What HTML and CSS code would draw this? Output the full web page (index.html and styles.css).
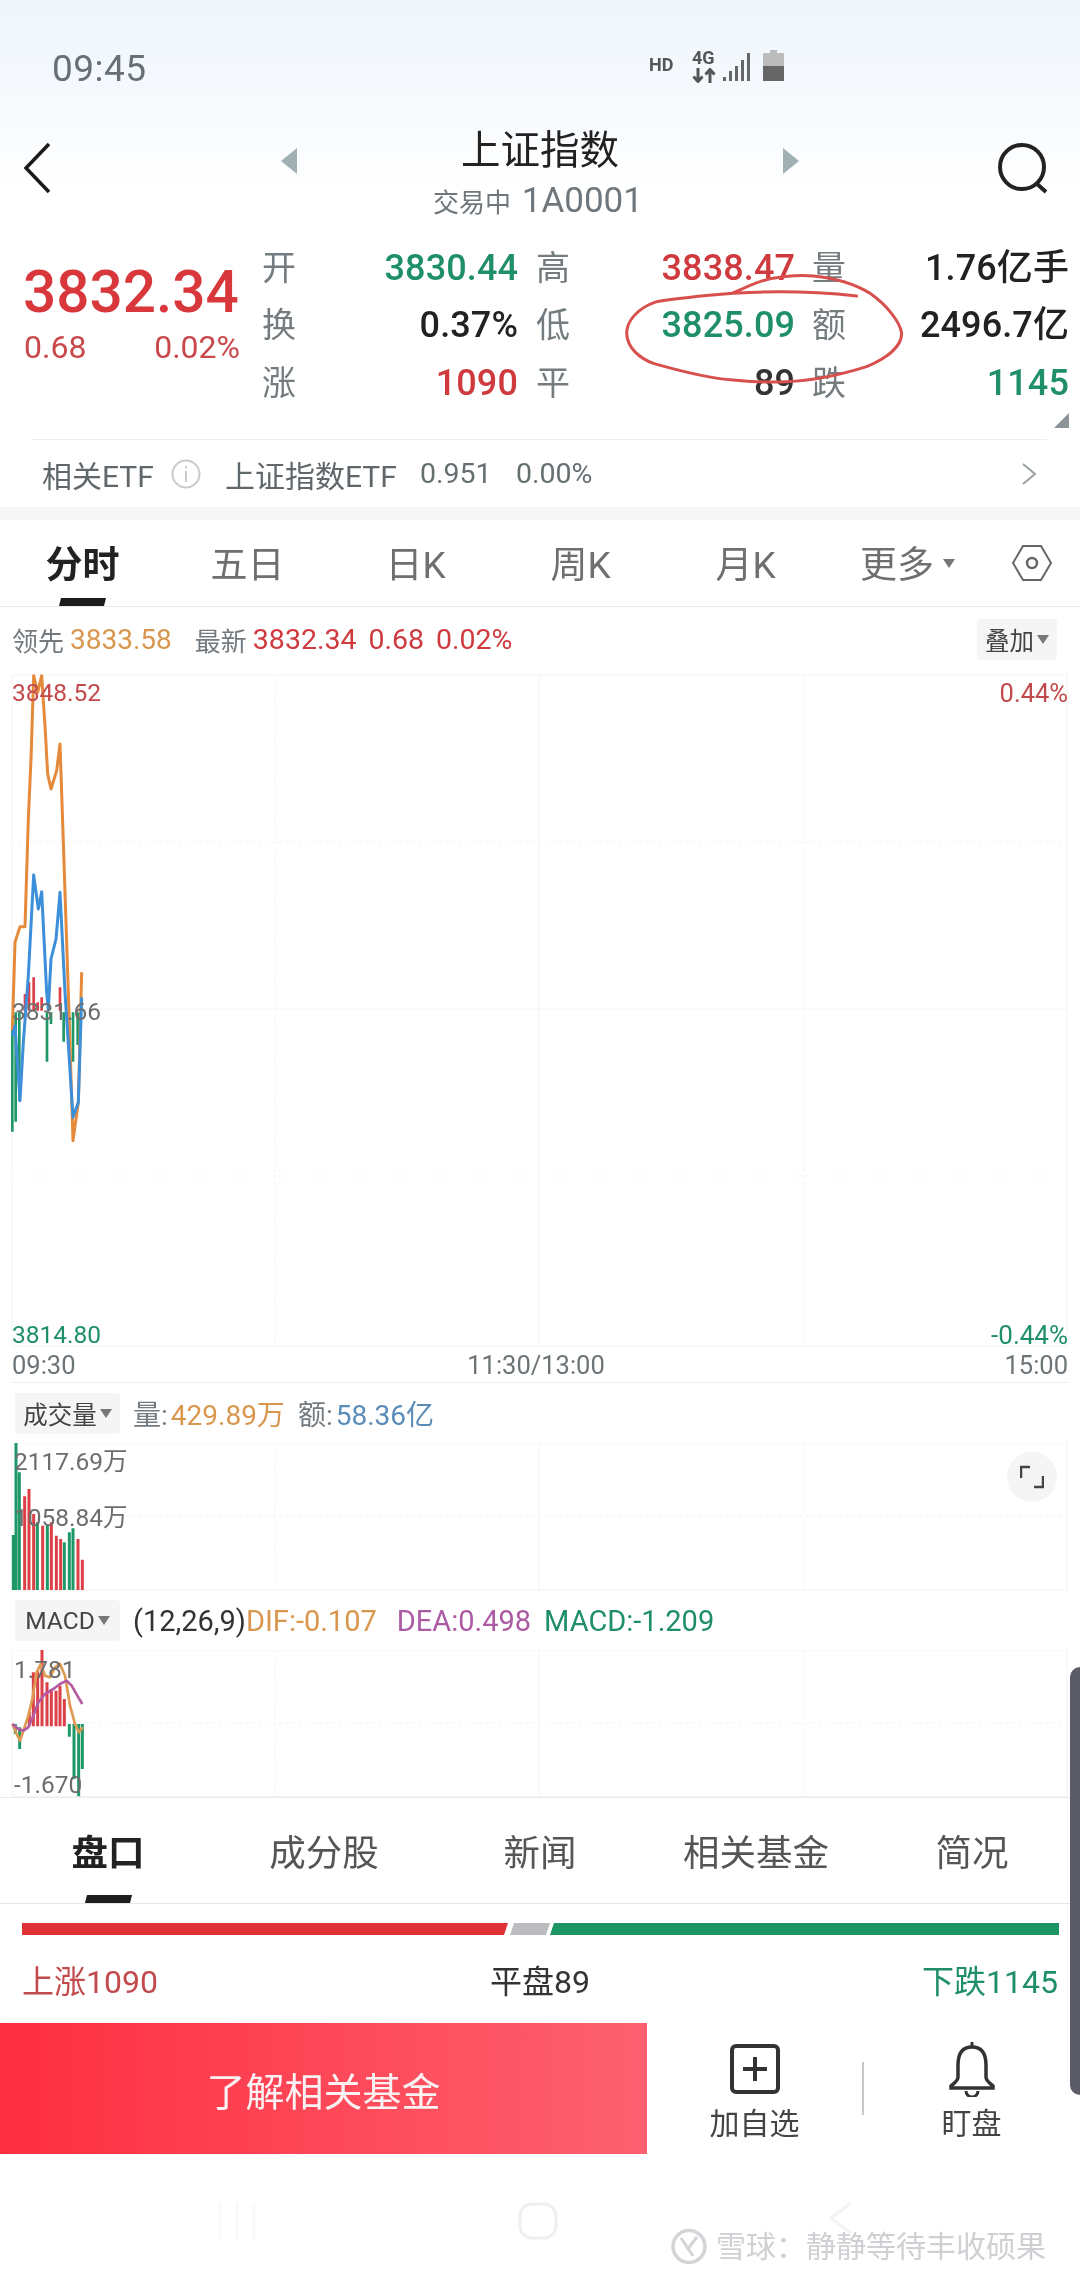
FILE: index.html
```html
<!DOCTYPE html>
<html lang="zh">
<head>
<meta charset="utf-8">
<title>上证指数</title>
<link rel="stylesheet" href="styles.css">
</head>
<body>
<div class="page">
  <div class="top">
    <div class="status">
      <span class="time">09:45</span>
      <div class="sys">
        <span class="hd">HD</span>
        <div class="net">
          <span class="fourg">4G</span>
          <svg width="24" height="15" viewBox="0 0 24 15"><path d="M6 0V13M1.500 8.500L6 13.500L10.500 8.500M18 15V2M13.500 6.500L18 1.500L22.500 6.500" fill="none" stroke="#555" stroke-width="3"/></svg>
        </div>
        <svg class="signal" width="28" height="28" viewBox="0 0 28 28"><path d="M1.500 28V24M7.500 28V18M13.500 28V13M19.500 28V7M25.500 28V0" stroke="#666" stroke-width="3"/></svg>
        <svg width="21" height="31" viewBox="0 0 21 31"><path d="M7 0H14V3H21V16H0V3H7Z" fill="#bcbcbc"/><rect y="16" width="21" height="15" fill="#666"/></svg>
      </div>
    </div>
    <div class="head">
      <svg class="back" width="30" height="52" viewBox="0 0 30 52"><path d="M27 2L4 26L27 50" fill="none" stroke="#1a1a1a" stroke-width="3.500"/></svg>
      <i class="tri tri-l"></i>
      <div class="title">
        <div class="name">上证指数</div>
        <div class="sub"><span class="sub-state">交易中</span> 1A0001</div>
      </div>
      <i class="tri tri-r"></i>
      <svg class="search" width="54" height="52" viewBox="0 0 54 52"><circle cx="26" cy="25" r="22" fill="none" stroke="#222" stroke-width="4"/><path d="M40 41L50 50" stroke="#222" stroke-width="4"/></svg>
    </div>
  </div>

  <div class="quote">
    <div class="last">
      <div class="price">3832.34</div>
      <div class="chg"><span>0.68</span><span>0.02%</span></div>
    </div>
    <div class="qgrid">
      <span class="lab">开</span><span class="val green">3830.44</span>
      <span class="lab">高</span><span class="val red">3838.47</span>
      <span class="lab">量</span><span class="val">1.76亿手</span>
      <span class="lab">换</span><span class="val">0.37%</span>
      <span class="lab">低</span><span class="val green">3825.09</span>
      <span class="lab">额</span><span class="val">2496.7亿</span>
      <span class="lab">涨</span><span class="val red">1090</span>
      <span class="lab">平</span><span class="val dark">89</span>
      <span class="lab">跌</span><span class="val green">1145</span>
    </div>
    <i class="corner"></i>
  </div>

  <div class="etf">
    <span class="etf-a">相关ETF</span>
    <svg class="info" width="30" height="30" viewBox="0 0 30 30"><circle cx="15" cy="15" r="13.500" fill="none" stroke="#c9cccd" stroke-width="2"/><path d="M15 12V23M15 7V9.500" stroke="#c9cccd" stroke-width="2"/></svg>
    <span class="etf-b">上证指数ETF</span>
    <span class="etf-c">0.951</span>
    <span class="etf-d">0.00%</span>
    <svg class="etf-go" width="16" height="22" viewBox="0 0 16 22"><path d="M2 1L14 11L2 21" fill="none" stroke="#9aa0a3" stroke-width="2"/></svg>
  </div>

  <div class="tabs">
    <span class="tab on">分时</span>
    <span class="tab">五日</span>
    <span class="tab">日K</span>
    <span class="tab">周K</span>
    <span class="tab">月K</span>
    <span class="tab">更多<i class="caret caret-more"></i></span>
    <svg class="hex" width="40" height="36" viewBox="0 0 40 36"><path d="M1 18L11 1H29L39 18L29 35H11Z" fill="none" stroke="#666" stroke-width="2"/><circle cx="20" cy="18" r="5" fill="none" stroke="#666" stroke-width="2.500"/></svg>
  </div>

  <div class="inforow">
    <span class="gray">领先</span><span class="orange">3833.58</span>
    <span class="gray ml">最新</span><span class="red">3832.34</span>
    <span class="red ms">0.68</span><span class="red ms">0.02%</span>
    <span class="pick pick-add">叠加<i class="caret"></i></span>
  </div>

  <div class="chart chart-main">
    <svg class="plot" width="1080" height="680" viewBox="0 24 3240 2040">
      <g class="grid">
        <path d="M36 48H3201M36 1050H3201M36 2061H3201M36 48V2061M1617 48V2061M3201 48V2061"/>
        <path class="dash" d="M36 549H3201M36 1551H3201M825 48V2061M2412 48V2061"/>
      </g>
      <path d="M37 1100V1418M47 1060V1388M58 1060V1325M141 1060V1208M153 1060V1095M191 1060V1148M219 1060V1208M233 1060V1158" class="bar-g" stroke-width="8"/>
      <path d="M75 1005V1055M87 970V1055M101 955V1055M113 1030V1055M125 1015V1055M180 985V1055" class="bar-r" stroke-width="8"/>
      <polyline class="ln-o" points="37,1115 45,850 60,803 75,803 85,480 93,300 101,50 113,100 125,50 135,200 143,345 153,390 170,335 180,255 190,550 205,1000 219,1445 235,1330 245,940"/>
      <polyline class="ln-b" points="37,1130 45,1100 60,1325 70,1150 85,950 101,648 115,750 125,698 140,1000 145,1050 153,900 168,840 180,700 195,1000 219,1375 235,1330 245,1015"/>
    </svg>
    <span class="tag tl">3848.52</span>
    <span class="tag tr">0.44%</span>
    <span class="tag ml-tag">3831.66</span>
    <span class="tag bl">3814.80</span>
    <span class="tag br">-0.44%</span>
  </div>

  <div class="timerow"><span>09:30</span><span>11:30/13:00</span><span>15:00</span></div>

  <div class="ihead">
    <span class="pick">成交量<i class="caret"></i></span>
    <span class="gray">量:</span><span class="orange">429.89万</span>
    <span class="gray ms2">额:</span><span class="blue">58.36亿</span>
  </div>

  <div class="chart chart-vol">
    <svg class="plot" width="1080" height="148" viewBox="0 72 3240 444">
      <g class="grid">
        <path d="M36 72H3201M36 513H3201M36 72V513M1617 72V513M3201 72V513"/>
        <path class="dash" d="M36 291H3201M825 72V513M2412 72V513"/>
      </g>
      <path class="bar-g" stroke-width="9" d="M40 513V348M48 513V72M58 513V160M112 513V310M142 513V318M193 513V370M208 513V340M219 513V328"/>
      <path class="bar-r" stroke-width="9" d="M74 513V232M87 513V210M101 513V285M128 513V320M154 513V310M169 513V350M182 513V360M234 513V360M247 513V422"/>
    </svg>
    <span class="tag v1">2117.69万</span>
    <span class="tag v2">1058.84万</span>
    <button class="expand" type="button"><svg width="24" height="24" viewBox="0 0 24 24"><path d="M1 13V2H10M23 11V22H14" fill="none" stroke="#444" stroke-width="2.500"/></svg></button>
  </div>

  <div class="ihead ihead-m">
    <span class="pick">MACD<i class="caret"></i></span>
    <span class="params">(12,26,9)</span><span class="orange">DIF:-0.107</span>
    <span class="purple ms3">DEA:0.498</span>
    <span class="green ms4">MACD:-1.209</span>
  </div>

  <div class="chart chart-macd">
    <svg class="plot" width="1080" height="147" viewBox="0 693 3240 441">
      <g class="grid">
        <path d="M36 693H3201M36 1132H3201M36 693V1132M1617 693V1132M3201 693V1132"/>
        <path class="dash" d="M36 912H3201M825 693V1132M2412 693V1132"/>
      </g>
      <path class="bar-r" stroke-width="9" d="M88 922V878M100 922V760M113 922V755M126 922V690M141 922V790M154 922V810M168 922V815M180 922V800M193 922V840"/>
      <path class="bar-g" stroke-width="9" d="M46 915V945M59 925V990M208 915V953M222 915V1080M236 915V1132M247 915V1050"/>
      <polyline class="ln-o2" points="37,915 50,945 60,965 72,930 85,890 97,840 110,760 122,735 135,770 150,775 165,745 180,735 195,770 210,860 225,915 237,940 248,925"/>
      <polyline class="ln-m" points="37,915 55,930 70,935 85,925 100,890 115,850 135,825 160,810 180,795 200,785 215,800 232,830 247,855"/>
    </svg>
    <span class="tag m1">1.781</span>
    <span class="tag m2">-1.670</span>
  </div>

  <div class="tabs2">
    <span class="tab2 on">盘口</span>
    <span class="tab2">成分股</span>
    <span class="tab2">新闻</span>
    <span class="tab2">相关基金</span>
    <span class="tab2">简况</span>
  </div>

  <div class="ratio">
    <i class="seg seg-r"></i><i class="seg seg-n"></i><i class="seg seg-g"></i>
  </div>
  <div class="counts">
    <span class="red-soft">上涨1090</span>
    <span class="mid">平盘89</span>
    <span class="green">下跌1145</span>
  </div>

  <div class="actions">
    <div class="cta">了解相关基金</div>
    <div class="act">
      <svg width="50" height="50" viewBox="0 0 50 50"><rect x="2" y="2" width="46" height="46" rx="4" fill="none" stroke="#333" stroke-width="4"/><path d="M25 13V37M13 25H37" stroke="#333" stroke-width="4"/></svg>
      <span>加自选</span>
    </div>
    <i class="vr"></i>
    <div class="act">
      <svg width="48" height="56" viewBox="0 0 48 56"><path d="M24 1V7" stroke="#333" stroke-width="3"/><path d="M24 6C13 6 10 15 10 24V36C10 40 6 42 3 45V47H45V45C42 42 38 40 38 36V24C38 15 35 6 24 6Z" fill="none" stroke="#333" stroke-width="3.500"/><path d="M18 50A6 6 0 0 0 30 50" fill="none" stroke="#333" stroke-width="3"/></svg>
      <span>盯盘</span>
    </div>
  </div>

  <div class="nav">
    <svg width="40" height="38" viewBox="0 0 40 38"><path d="M3 0V38M20 0V38M37 0V38" stroke="#f9f9f9" stroke-width="3"/></svg>
    <svg class="nav-home" width="40" height="38" viewBox="0 0 40 38"><rect x="2" y="2" width="36" height="34" rx="12" fill="none" stroke="#efefef" stroke-width="3"/></svg>
    <svg width="24" height="32" viewBox="0 0 24 32"><path d="M22 1L2 16L22 31" fill="none" stroke="#f3f3f3" stroke-width="3"/></svg>
  </div>

  <svg class="circle" width="320" height="170" viewBox="0 0 960 510"><path d="M770 138C650 125 520 122 400 130C300 138 230 145 170 155C110 175 80 215 80 250C82 295 120 325 160 340C230 360 320 385 400 390C460 396 510 398 560 395C630 393 720 375 800 350C860 325 905 290 905 250C900 215 860 165 810 130C770 105 710 85 640 78C590 74 520 80 480 95C450 105 420 120 395 130" fill="none" stroke="#d8504e" stroke-width="9" stroke-linecap="round"/></svg>

  <i class="edge"></i>

  <div class="mark">
    <svg width="36" height="37" viewBox="0 0 36 37"><circle cx="18" cy="18.500" r="16" fill="none" stroke="#d4d4d8" stroke-width="3.500"/><path d="M10 10L22 28M26 9L16 22" fill="none" stroke="#d4d4d8" stroke-width="3"/></svg>
    <span>雪球：静静等待丰收硕果</span>
  </div>
</div>
</body>
</html>
```

FILE: styles.css
```css
* { box-sizing: border-box; }
html, body { margin: 0; padding: 0; background: #fff; }
body { font-family: Roboto, "Noto Sans CJK SC", sans-serif; color: #222; }
.page { position: relative; width: 1080px; height: 2280px; overflow: hidden; display: flex; flex-direction: column; background: #fff; filter: blur(0.5px); }
i { display: block; font-style: normal; }

.red { color: #cf3a3e; }
.red-soft { color: #c2494c; }
.green { color: #1f8f68; }
.orange { color: #d9964e; }
.blue { color: #5b8cb8; }
.purple { color: #ab5aa3; }
.gray { color: #737b80; }
.dark { color: #333; }

.top { height: 236px; background: linear-gradient(#eff6fc 0, #f5f9fd 90px, #fff 190px); }
.status { height: 116px; padding: 50px 296px 0 52px; display: flex; justify-content: space-between; align-items: flex-start; }
.time { font-size: 37px; line-height: 38px; color: #667075; letter-spacing: 0.5px; }
.sys { display: flex; align-items: flex-start; }
.hd { font-size: 18px; font-weight: 700; line-height: 18px; margin-top: 6px; width: 43px; color: #555; }
.net { width: 31px; display: flex; flex-direction: column; align-items: flex-start; }
.fourg { font-size: 18px; font-weight: 700; line-height: 16px; color: #555; margin-bottom: 2px; }
.signal { margin: 3px 12px 0 0; }

.head { display: grid; grid-template-columns: 281px 16px 1fr 16px 281px; align-items: start; }
.back { margin: 26px 0 0 22px; }
.tri { width: 0; height: 0; margin-top: 32px; border-top: 13px solid transparent; border-bottom: 13px solid transparent; }
.tri-l { border-right: 16px solid #a0b0b5; }
.tri-r { border-left: 16px solid #a0b0b5; }
.title { text-align: center; }
.name { font-size: 39.500px; line-height: 52px; height: 56px; margin-top: 9px; color: #222; }
.sub { font-size: 35px; line-height: 36px; color: #6f777c; margin-top: 2px; margin-left: -4px; }
.sub-state { font-size: 26px; margin-right: 2px; }
.search { margin: 26px 0 0 197px; }

.quote { position: relative; height: 203px; display: flex; padding-left: 24px; }
.last { width: 238px; }
.price { font-size: 58.500px; font-weight: 500; line-height: 70px; height: 70px; margin-top: 21px; margin-left: -1px; color: #d8373b; white-space: nowrap; }
.chg { display: flex; justify-content: space-between; width: 216px; font-size: 32px; line-height: 40px; margin-top: 0; color: #c8484b; }
.qgrid { display: grid; grid-template-columns: 36px 220px 55px 222px 54px 220px; grid-auto-rows: 57.500px; align-items: center; height: 174px; margin-top: 3px; }
.lab { font-size: 34px; line-height: 40px; color: #757c80; text-align: right; margin-right: 3px; white-space: nowrap; }
.val { font-size: 36px; font-weight: 500; line-height: 40px; text-align: right; white-space: nowrap; letter-spacing: 0.1px; }
.corner { position: absolute; right: 11px; top: 177px; width: 0; height: 0; border-left: 15px solid transparent; border-bottom: 15px solid #8c9498; }
.circle { position: absolute; left: 600px; top: 250px; }

.etf { height: 68px; margin: 0 33px 0 31px; border-top: 1px solid #eee; display: flex; align-items: center; font-size: 30px; color: #5f676b; padding-left: 11px; }
.etf-a { width: 129px; }
.etf-b { margin-left: 24px; width: 195px; white-space: nowrap; }
.etf-c { width: 96px; font-size: 28.500px; color: #666e72; }
.etf-d { font-size: 28.500px; color: #666e72; }
.etf-go { margin-left: auto; margin-right: 10px; }

.tabs { height: 100px; padding-top: 8px; border-top: 13px solid #f6f6f6; border-bottom: 1px solid #eaeaea; display: flex; align-items: center; position: relative; }
.tab { width: 165px; font-size: 37px; line-height: 40px; color: #6f6f6f; text-align: center; padding-bottom: 2px; display: flex; justify-content: center; align-items: center; }
.tab:nth-child(n+3):nth-child(-n+5) { padding-left: 6px; }
.tab.on { color: #222; font-weight: 700; }
.tab.on::after, .tab2.on::after { content: ""; position: absolute; width: 45px; height: 8px; background: #1d1d1d; bottom: 0; transform: skewX(-14deg); }
.tab.on::after { left: 60px; }
.hex { margin-left: 22px; margin-bottom: 8px; }
.caret { width: 0; height: 0; margin-left: 3px; border-left: 6px solid transparent; border-right: 6px solid transparent; border-top: 9px solid #777; }
.caret-more { margin-left: 9px; margin-top: -6px; }

.inforow { height: 60px; padding: 5px 23px 0 12px; display: flex; align-items: center; font-size: 28.500px; white-space: nowrap; }
.inforow .gray { font-size: 26px; }
.inforow .gray + span { margin-left: 6px; }
.inforow .orange { font-size: 28px; }
.ml { margin-left: 23px; }
.ms { margin-left: 12px; }
.pick { background: #f6f5f5; border-radius: 4px; color: #444; display: flex; align-items: center; justify-content: center; height: 41px; font-size: 24.500px; flex: none; }
.pick-add { margin-left: auto; width: 80px; }

.chart { position: relative; }
.chart-main { height: 680px; }
.chart-vol { height: 148px; }
.chart-macd { height: 147px; }
.plot { display: block; }
.grid path { fill: none; stroke: #f3f3f3; stroke-width: 3; }
.grid path.dash { stroke-dasharray: 10 10; }
.bar-g { stroke: #1f9868; fill: none; }
.bar-r { stroke: #dc3f45; fill: none; }
.ln-o, .ln-b, .ln-o2, .ln-m { fill: none; stroke-width: 9; stroke-linejoin: round; }
.ln-o { stroke: #e58a3a; }
.ln-b { stroke: #3d8fd9; }
.ln-o2 { stroke: #df9a52; stroke-width: 8; }
.ln-m { stroke: #b45aa4; stroke-width: 8; }

.tag { position: absolute; font-size: 24.500px; line-height: 28px; color: #6d6d6d; white-space: nowrap; }
.tl { left: 12px; top: 12px; color: #c2494c; }
.tr { right: 12px; top: 12px; color: #c2494c; font-size: 25.500px; }
.ml-tag { left: 12px; top: 331px; }
.bl { left: 12px; top: 654px; color: #1f8f68; }
.br { right: 12px; top: 654px; color: #1f8f68; font-size: 26px; }
.v1 { left: 14px; top: 5px; }
.v2 { left: 14px; top: 61px; }
.m1 { left: 14px; top: 6px; }
.m2 { left: 14px; top: 121px; }
.expand { position: absolute; left: 1007px; top: 9px; width: 50px; height: 50px; padding: 0; border: 0; border-radius: 50%; background: #f6f5f5; display: flex; align-items: center; justify-content: center; }

.timerow { height: 36px; margin: 0 12px; border-bottom: 1px solid #eee; display: flex; justify-content: space-between; align-items: center; font-size: 25.500px; color: #6d7478; padding-top: 1px; }
.timerow span:nth-child(2) { margin-left: -8px; }
.ihead { height: 60px; padding: 0 0 0 15px; display: flex; align-items: center; font-size: 28px; white-space: nowrap; }
.ihead .pick { width: 105px; margin-right: 13px; }
.ihead .gray + span { margin-left: 3px; }
.ihead-m { height: 59px; font-size: 29px; }
.ms2 { margin-left: 13px; }
.ms3 { margin-left: 20px; }
.ms4 { margin-left: 13px; }
.params { color: #333; }

.tabs2 { height: 107px; border-top: 1px solid #eaeaea; border-bottom: 1px solid #e6e6e6; display: grid; grid-template-columns: repeat(5, 216px); position: relative; padding-top: 34px; }
.tab2 { font-size: 36.500px; line-height: 44px; text-align: center; color: #555; }
.tab2.on { color: #222; font-weight: 700; }
.tab2.on::after { left: 86px; }

.ratio { height: 32px; padding: 19px 21px 0 22px; display: flex; }
.seg { height: 12px; flex: none; }
.seg-r { width: 486px; background: #df3236; clip-path: polygon(0 0, 100% 0, calc(100% - 4px) 100%, 0 100%); }
.seg-n { width: 40px; margin-left: 2px; background: #bcbcc0; clip-path: polygon(4px 0, 100% 0, calc(100% - 4px) 100%, 0 100%); }
.seg-g { width: 509px; margin-left: 0; background: #1a9563; clip-path: polygon(4px 0, 100% 0, 100% 100%, 0 100%); }
.counts { height: 87px; padding: 26px 22px 0 22px; display: flex; justify-content: space-between; font-size: 32px; line-height: 40px; align-items: flex-start; }
.mid { color: #333; margin-left: 0; }

.actions { height: 131px; display: flex; align-items: flex-start; }
.cta { flex: none; width: 647px; height: 131px; background: linear-gradient(90deg, #fe2e40, #fd6170); color: #fbf1f2; font-size: 39px; display: flex; align-items: center; justify-content: center; }
.act { flex: none; width: 215px; padding-top: 18px; display: flex; flex-direction: column; align-items: center; font-size: 30px; line-height: 36px; color: #444; }
.act svg { height: 56px; margin-bottom: 9px; }
.vr { flex: none; width: 2px; height: 53px; margin-top: 39px; background: #c4c8c9; }

.nav { flex: 1; display: flex; padding: 48px 227px 0 217px; justify-content: space-between; align-items: flex-start; }
.nav-home { margin-left: -10px; }
.mark { position: absolute; left: 671px; top: 2228px; display: flex; align-items: center; font-size: 30px; line-height: 37px; color: #d0d0d4; white-space: nowrap; }
.mark svg { margin-right: 9px; }
.edge { position: absolute; right: 0; top: 1667px; width: 10px; height: 428px; background: #5c5c68; border-radius: 10px 0 0 10px; }
```
